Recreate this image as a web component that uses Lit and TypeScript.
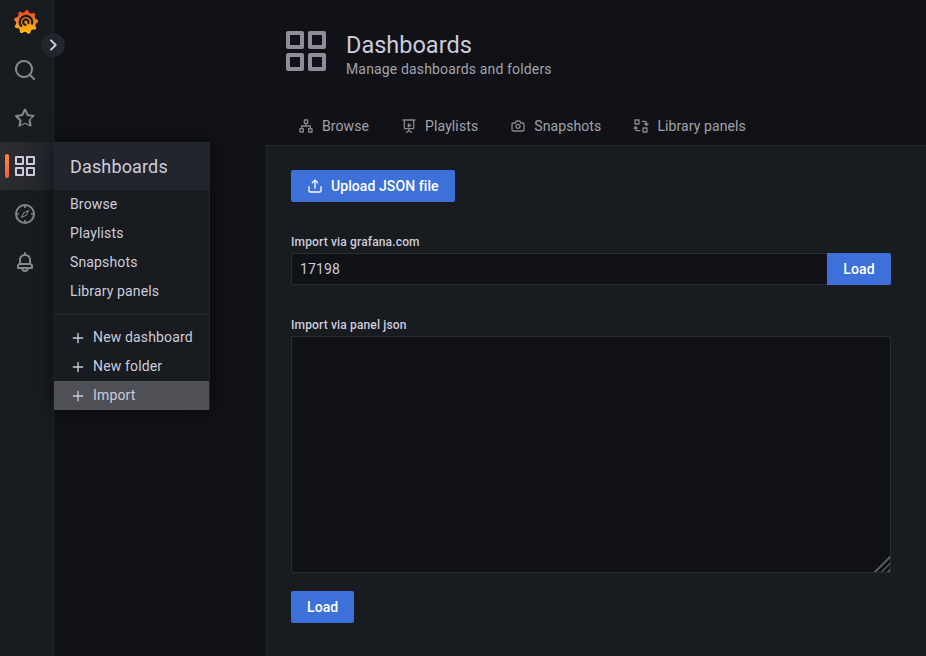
import { LitElement, css, html, svg } from 'lit'
import { customElement } from 'lit/decorators.js'

const apps = 'M10,13H3a1,1,0,0,0-1,1v7a1,1,0,0,0,1,1h7a1,1,0,0,0,1-1V14A1,1,0,0,0,10,13ZM9,20H4V15H9ZM21,2H14a1,1,0,0,0-1,1v7a1,1,0,0,0,1,1h7a1,1,0,0,0,1-1V3A1,1,0,0,0,21,2ZM20,9H15V4h5Zm1,4H14a1,1,0,0,0-1,1v7a1,1,0,0,0,1,1h7a1,1,0,0,0,1-1V14A1,1,0,0,0,21,13Zm-1,7H15V15h5ZM10,2H3A1,1,0,0,0,2,3v7a1,1,0,0,0,1,1h7a1,1,0,0,0,1-1V3A1,1,0,0,0,10,2ZM9,9H4V4H9Z'
const search = 'M21.71,20.29,18,16.61A9,9,0,1,0,16.61,18l3.68,3.68a1,1,0,0,0,1.42,0A1,1,0,0,0,21.71,20.29ZM11,18a7,7,0,1,1,7-7A7,7,0,0,1,11,18Z'
const star = 'M22,9.67A1,1,0,0,0,21.14,9l-5.69-.83L12.9,3a1,1,0,0,0-1.8,0L8.55,8.16,2.86,9a1,1,0,0,0-.81.68,1,1,0,0,0,.25,1l4.13,4-1,5.68A1,1,0,0,0,6.9,20.44L12,17.77l5.1,2.67a.93.93,0,0,0,.46.12,1,1,0,0,0,.59-.19,1,1,0,0,0,.4-1l-1-5.68,4.13-4A1,1,0,0,0,22,9.67Zm-6.15,4a1,1,0,0,0-.29.88l.72,4.2-3.76-2a1.06,1.06,0,0,0-.94,0l-3.76,2,.72-4.2a1,1,0,0,0-.29-.88l-3-3,4.21-.61a1,1,0,0,0,.76-.55L12,5.7l1.88,3.82a1,1,0,0,0,.76.55l4.21.61Z'
const bell = 'M18,13.18V10a6,6,0,0,0-5-5.91V3a1,1,0,0,0-2,0V4.09A6,6,0,0,0,6,10v3.18A3,3,0,0,0,4,16v2a1,1,0,0,0,1,1H8.14a4,4,0,0,0,7.72,0H19a1,1,0,0,0,1-1V16A3,3,0,0,0,18,13.18ZM8,10a4,4,0,0,1,8,0v3H8Zm4,10a2,2,0,0,1-1.72-1h3.44A2,2,0,0,1,12,20Zm6-3H6V16a1,1,0,0,1,1-1H17a1,1,0,0,1,1,1Z'
// ring with four inward ticks and a slanted hollow needle
const compass = 'M12,2A10,10,0,1,0,22,12,10,10,0,0,0,12,2Zm0,18a8,8,0,1,1,8-8A8,8,0,0,1,12,20ZM11.2,4h1.6V6H11.2Zm0,14h1.6v2H11.2ZM4,11.2H6v1.6H4Zm14,0h2v1.6H18ZM16.6,7.4,13.6,13.6,7.4,16.6,10.4,10.4ZM14.6,9.4,11.3,11,9.4,14.6,12.7,13Z'
const plus = 'M19,11H13V5a1,1,0,0,0-2,0v6H5a1,1,0,0,0,0,2h6v6a1,1,0,0,0,2,0V13h6a1,1,0,0,0,0-2Z'
const upload = 'M8.71,7.71,11,5.41V15a1,1,0,0,0,2,0V5.41l2.29,2.3a1,1,0,0,0,1.42,0,1,1,0,0,0,0-1.42l-4-4a1,1,0,0,0-.33-.21,1,1,0,0,0-.76,0,1,1,0,0,0-.33.21l-4,4A1,1,0,1,0,8.71,7.71ZM21,12a1,1,0,0,0-1,1v6a1,1,0,0,1-1,1H5a1,1,0,0,1-1-1V13a1,1,0,0,0-2,0v6a3,3,0,0,0,3,3H19a3,3,0,0,0,3-3V13A1,1,0,0,0,21,12Z'
const sitemap = 'M21,15H19.5V12a1,1,0,0,0-1-1H13V9h1.5a1,1,0,0,0,1-1V3a1,1,0,0,0-1-1h-5a1,1,0,0,0-1,1V8a1,1,0,0,0,1,1H11v2H5.5a1,1,0,0,0-1,1v3H3a1,1,0,0,0-1,1v5a1,1,0,0,0,1,1H8a1,1,0,0,0,1-1V16a1,1,0,0,0-1-1H6.5V13h11v2H16a1,1,0,0,0-1,1v5a1,1,0,0,0,1,1h5a1,1,0,0,0,1-1V16A1,1,0,0,0,21,15ZM10.5,7V4h3V7ZM7,17v3H4V17Zm13,3H17V17h3Z'
const presentation = 'M21,2H3A1,1,0,0,0,3,4H4v11a2,2,0,0,0,2,2h5v1.6L7.5,20.9a1,1,0,0,0,1,1.7L12,20.4l3.5,2.2a1,1,0,0,0,1-1.7L13,18.6V17h5a2,2,0,0,0,2-2V4h1a1,1,0,0,0,0-2ZM18,15H6V4H18ZM10,13.6a.8.8,0,0,0,1.2.7l4-2.6a.8.8,0,0,0,0-1.4l-4-2.6a.8.8,0,0,0-1.2.7Zm2-3.9L13.2,10.5,12,11.3Z'
const camera = 'M19,6.5H16.72l-.32-1a3,3,0,0,0-2.84-2H10.44A3,3,0,0,0,7.6,5.55l-.32,1H5a3,3,0,0,0-3,3v8a3,3,0,0,0,3,3H19a3,3,0,0,0,3-3v-8A3,3,0,0,0,19,6.5Zm1,11a1,1,0,0,1-1,1H5a1,1,0,0,1-1-1v-8a1,1,0,0,1,1-1H8a1,1,0,0,0,1-.68l.54-1.64a1,1,0,0,1,.95-.68h3.12a1,1,0,0,1,.95.68l.54,1.64A1,1,0,0,0,16,8.5h3a1,1,0,0,1,1,1Zm-8-9a4,4,0,1,0,4,4A4,4,0,0,0,12,8.5Zm0,6a2,2,0,1,1,2-2A2,2,0,0,1,12,14.5Z'
const library = 'M3,2H9a1,1,0,0,1,1,1V9a1,1,0,0,1-1,1H3A1,1,0,0,1,2,9V3A1,1,0,0,1,3,2ZM4,4V8H8V4ZM15,14h6a1,1,0,0,1,1,1v6a1,1,0,0,1-1,1H15a1,1,0,0,1-1-1V15A1,1,0,0,1,15,14Zm1,2v4h4V16ZM13,4h5a3,3,0,0,1,3,3V8.6l1.3-1.3,1.4,1.4L20,12.4,16.3,8.7l1.4-1.4L19,8.6V7a1,1,0,0,0-1-1H13ZM11,20H6a3,3,0,0,1-3-3V15.4L1.7,16.7.3,15.3,4,11.6l3.7,3.7L6.3,16.7,5,15.4V17a1,1,0,0,0,1,1h5Z'

const icon = (d: string, cls = '') => html`<svg class="icon ${cls}" viewBox="0 0 24 24">${svg`<path d=${d} fill="currentColor"></path>`}</svg>`

// gear outline of the logo, computed around the centre of a 24 box
const gear = () => {
	const pts: string[] = []
	const teeth = 9
	for (let i = 0; i < teeth * 4; i++) {
		const a = (i / (teeth * 4)) * Math.PI * 2 - Math.PI / 2
		const r = i % 4 === 0 || i % 4 === 1 ? 12 : 9.9
		pts.push(`${(12 + r * Math.cos(a)).toFixed(2)},${(12 + r * Math.sin(a)).toFixed(2)}`)
	}
	return pts.join(' ')
}

const logo = html`<svg class="logo" viewBox="0 0 24 24">
	${svg`<defs><linearGradient id="lg" x1="0" y1="0" x2="0" y2="1"><stop offset="0" stop-color="#e8401f"></stop><stop offset="0.5" stop-color="#f58a1f"></stop><stop offset="1" stop-color="#fcc30f"></stop></linearGradient></defs>
	<polygon points=${gear()} fill="url(#lg)"></polygon>
	<path d="M7.2,16A6.2,6.2,0,1,1,18,13.6" fill="none" stroke="#181b1f" stroke-width="2.2" stroke-linecap="round"></path>
	<path d="M14.4,13A2.7,2.7,0,1,0,11.4,14.8" fill="none" stroke="#181b1f" stroke-width="2.2" stroke-linecap="round"></path>`}
</svg>`

const menuLinks = ['Browse', 'Playlists', 'Snapshots', 'Library panels']
const tabs: [string, string][] = [['Browse', sitemap], ['Playlists', presentation], ['Snapshots', camera], ['Library panels', library]]

@customElement('app-root')
export class AppRoot extends LitElement {
	render() {
		return html`
			<div class="page">
				<nav class="side">
					<div class="side-logo">${logo}</div>
					<div class="side-item">${icon(search)}</div>
					<div class="side-item">${icon(star)}</div>
					<div class="side-item active"><span class="marker"></span>${icon(apps)}</div>
					<div class="side-item">${icon(compass)}</div>
					<div class="side-item">${icon(bell)}</div>
				</nav>

				<button class="expander" aria-label="Expand">
					<svg viewBox="0 0 24 24"><path d="M9 5l7 7-7 7" fill="none" stroke="currentColor" stroke-width="3" stroke-linecap="round" stroke-linejoin="round"></path></svg>
				</button>

				<div class="menu">
					<div class="menu-title">Dashboards</div>
					<div class="menu-links">
						${menuLinks.map(l => html`<div class="menu-link"><span>${l}</span></div>`)}
					</div>
					<div class="menu-divider"></div>
					<div class="menu-link add">${icon(plus)}<span>New dashboard</span></div>
					<div class="menu-link add">${icon(plus)}<span>New folder</span></div>
					<div class="menu-link add hover">${icon(plus)}<span>Import</span></div>
				</div>

				<main class="main">
					<header class="head">
						<svg class="head-icon" viewBox="0 0 24 24"><path d=${apps} fill="currentColor"></path></svg>
						<div class="head-text">
							<h1>Dashboards</h1>
							<div class="sub">Manage dashboards and folders</div>
						</div>
					</header>
					<div class="tabs">
						${tabs.map(([label, d]) => html`<div class="tab">${icon(d)}${label}</div>`)}
					</div>
					<section class="panel">
						<button class="btn upload">${icon(upload)}Upload JSON file</button>
						<label class="lbl">Import via grafana.com</label>
						<div class="row">
							<input class="input" .value=${'17198'} />
							<button class="btn joined">Load</button>
						</div>
						<label class="lbl">Import via panel json</label>
						<div class="area-wrap">
							<textarea class="area"></textarea>
							<span class="grip"></span>
						</div>
						<button class="btn load">Load</button>
					</section>
				</main>
			</div>
		`
	}

	static styles = css`
		:host {
			display: block;
			font-family: Roboto, "Liberation Sans", sans-serif;
			font-size: 14px;
			letter-spacing: 0.01071em;
			color: #ccccdc;
			color-scheme: dark;
		}
		* { box-sizing: border-box; }

		.page {
			position: relative;
			display: flex;
			width: 926px;
			height: 656px;
			overflow: hidden;
			background: #111217;
		}

		.icon { width: 16px; height: 16px; flex: none; display: block; }

		.side {
			width: 54px;
			flex: none;
			background: #181b1f;
			border-right: 1px solid #24262c;
		}
		.side-logo {
			height: 46px;
			display: flex;
			align-items: center;
			justify-content: center;
			padding: 0 2px 3px 0;
		}
		.logo { width: 24px; height: 24px; display: block; }
		.side-item {
			position: relative;
			height: 48px;
			display: flex;
			align-items: center;
			justify-content: center;
			padding-right: 3px;
			color: #86878f;
		}
		.side-item .icon { width: 24px; height: 24px; }
		.side-item.active {
			color: #ccccdc;
			background: linear-gradient(90deg, #2c2d33, #22252b);
		}
		.marker {
			position: absolute;
			left: 5px;
			top: 12px;
			width: 4px;
			height: 24px;
			border-radius: 2px;
			background: linear-gradient(#ff8833, #f55f3e);
		}

		.expander {
			position: absolute;
			left: 41px;
			top: 33px;
			width: 24px;
			height: 24px;
			padding: 4px;
			border: 0;
			border-radius: 50%;
			background: #22252b;
			color: #ccccdc;
		}
		.expander svg { display: block; width: 16px; height: 16px; }

		.menu {
			position: absolute;
			left: 54px;
			top: 142px;
			width: 156px;
			height: 268px;
			background: #181b1f;
			border-right: 1px solid #24262c;
			box-shadow: 0 0 20px rgba(0, 0, 0, 0.5);
		}
		.menu-title {
			height: 48px;
			display: flex;
			align-items: center;
			padding-left: 16px;
			font-size: 18px;
			background: #22252b;
		}
		.menu-link {
			height: 29px;
			display: flex;
			align-items: center;
			padding-left: 16px;
		}
		.menu-link span { margin-top: -2px; }
		.menu-divider {
			height: 1px;
			margin: 8px 0;
			background: #24262c;
		}
		.menu-link.add { gap: 7px; }
		.menu-link.hover { background: #4e5055; }

		.main {
			flex: 1;
			min-width: 0;
			display: flex;
			flex-direction: column;
			padding-left: 212px;
		}
		.head {
			display: flex;
			align-items: flex-start;
			gap: 14px;
			height: 98px;
			padding: 27px 0 0 18px;
			margin-left: -2px;
		}
		.head-icon { width: 48px; height: 48px; display: block; flex: none; color: #8e8e99; margin-right: 2px; }
		.head-text { padding-top: 3px; }
		h1 {
			margin: 0;
			font-size: 23.5px;
			font-weight: 400;
			line-height: 30px;
			letter-spacing: 0;
		}
		.sub { color: #a2a2ac; line-height: 18px; }

		.tabs {
			display: flex;
			height: 47px;
			padding: 9px 0 0 16px;
			align-items: center;
			color: #a2a2ac;
			letter-spacing: 0.1px;
		}
		.tab { display: flex; align-items: center; gap: 8px; padding: 0 16px; }
		.tab .icon { color: #86878f; }

		.panel {
			flex: 1;
			background: #181b1f;
			border-left: 1px solid #24262c;
			border-top: 1px solid #24262c;
			padding: 24px 35px 0 24px;
			display: flex;
			flex-direction: column;
			align-items: flex-start;
		}

		.btn {
			height: 32px;
			display: flex;
			align-items: center;
			border: 0;
			border-radius: 2px;
			padding: 0 16px;
			background: #3d71d9;
			color: #fff;
			font: 500 14px Roboto, "Liberation Sans", sans-serif;
			letter-spacing: 0.08px;
		}
		.upload { gap: 8px; }
		.joined { border-radius: 0 2px 2px 0; width: 64px; justify-content: center; flex: none; }
		.load { margin-top: 18px; }

		.lbl {
			font-size: 12px;
			font-weight: 500;
			line-height: 15px;
			margin: 33px 0 3px;
		}

		.row { display: flex; width: 100%; height: 32px; }
		.input {
			flex: 1;
			min-width: 0;
			height: 32px;
			padding: 0 8px;
			background: #111217;
			border: 1px solid #2a2c31;
			border-right: 0;
			border-radius: 2px 0 0 2px;
			color: #ccccdc;
			font: 400 14px Roboto, "Liberation Sans", sans-serif;
			letter-spacing: 0.01071em;
			outline: none;
		}
		.area-wrap { position: relative; width: 100%; height: 237px; }
		.area {
			display: block;
			width: 100%;
			height: 100%;
			background: #111217;
			border: 1px solid #2a2c31;
			border-radius: 2px;
			color: #ccccdc;
			outline: none;
			resize: none;
		}
		.grip {
			position: absolute;
			right: 1px;
			bottom: 1px;
			width: 18px;
			height: 18px;
			clip-path: polygon(100% 0, 100% 100%, 0 100%);
			background: repeating-linear-gradient(135deg, #55565b 0 2px, transparent 2px 4.6px);
		}
	`
}
